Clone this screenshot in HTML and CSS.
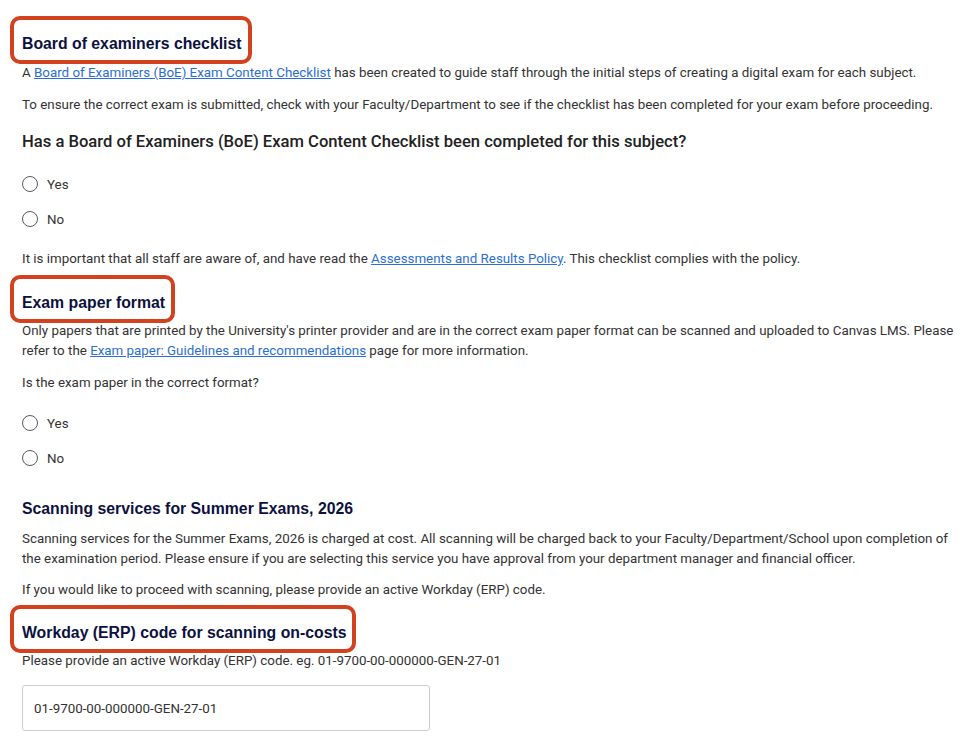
FILE: index.html
```html
<!DOCTYPE html>
<html lang="en">

<head>
    <meta charset="UTF-8">
    <meta name="viewport" content="width=device-width, initial-scale=1.0">
    <title>Exam submission</title>
    <link rel="stylesheet" href="styles.css">
</head>

<body>
    <div class="form">
        <!-- BoE checklist -->
        <h2 class="title marked first">Board of examiners checklist</h2>
        <p class="text">A <a href="#">Board of Examiners (BoE) Exam Content Checklist</a> has been created to guide staff through the initial steps of creating a digital exam for each subject.</p>
        <p class="text">To ensure the correct exam is submitted, check with your Faculty/Department to see if the checklist has been completed for your exam before proceeding.</p>
        <h3 class="question">Has a Board of Examiners (BoE) Exam Content Checklist been completed for this subject?</h3>
        <div class="choices">
            <label class="choice"><input type="radio" name="boe"> Yes</label>
            <label class="choice"><input type="radio" name="boe"> No</label>
        </div>
        <p class="text after">It is important that all staff are aware of, and have read the <a href="#">Assessments and Results Policy</a>. This checklist complies with the policy.</p>

        <!-- paper format -->
        <h2 class="title marked">Exam paper format</h2>
        <p class="text">Only papers that are printed by the University's printer provider and are in the correct exam paper format can be scanned and uploaded to Canvas LMS. Please refer to the <a href="#">Exam paper: Guidelines and recommendations</a> page for more information.</p>
        <p class="text">Is the exam paper in the correct format?</p>
        <div class="choices">
            <label class="choice"><input type="radio" name="format"> Yes</label>
            <label class="choice"><input type="radio" name="format"> No</label>
        </div>

        <!-- scanning -->
        <h2 class="title scan">Scanning services for Summer Exams, 2026</h2>
        <p class="text">Scanning services for the Summer Exams, 2026 is charged at cost. All scanning will be charged back to your Faculty/Department/School upon completion of the examination period. Please ensure if you are selecting this service you have approval from your department manager and financial officer.</p>
        <p class="text">If you would like to proceed with scanning, please provide an active Workday (ERP) code.</p>

        <h2 class="title marked code">Workday (ERP) code for scanning on-costs</h2>
        <p class="text">Please provide an active Workday (ERP) code. eg. 01-9700-00-000000-GEN-27-01</p>
        <input class="field" type="text" value="01-9700-00-000000-GEN-27-01">
    </div>
</body>

</html>
```

FILE: styles.css
```css
* {
    padding: 0;
    margin: 0;
    box-sizing: border-box;
}

body {
    font-family: Roboto, "Liberation Sans", sans-serif;
    font-size: 13.35px;
    color: #333;
    background: #fff;
}

.form {
    padding-left: 22px;
    width: 962px;
}

a {
    color: #2b6fd4;
}

.title {
    position: relative;
    width: fit-content;
    font-family: "Liberation Sans", Arial, sans-serif;
    font-size: 15.8px;
    font-weight: bold;
    line-height: 20px;
    color: #0c1140;
    margin: 24px 0 8px;
}

.title.first {
    margin-top: 34px;
    margin-bottom: 9px;
}

.title.scan {
    margin-top: 29px;
    margin-bottom: 10px;
}

.title.code {
    margin-top: 23px;
}

/* red frame drawn round the important headings */
.marked::after {
    content: "";
    position: absolute;
    left: -12px;
    right: -10px;
    top: -18px;
    bottom: -10px;
    border: 4px solid #d3421e;
    border-radius: 10px;
}

.text {
    line-height: 20px;
    margin-bottom: 12px;
}

.scan + .text {
    line-height: 19.5px;
    margin-bottom: 12px;
}

.question {
    font-size: 16.6px;
    font-weight: 500;
    line-height: 24px;
    color: #222;
    margin: 15px 0 18px;
}

.choices {
    display: flex;
    flex-direction: column;
    gap: 11px;
}

.text + .choices {
    margin-top: 18px;
}

.choice {
    display: flex;
    align-items: center;
    gap: 9px;
    height: 24px;
}

.choice input {
    appearance: none;
    width: 16px;
    height: 16px;
    border: 1.5px solid #5a5a5a;
    border-radius: 50%;
    margin: 0;
}

.after {
    margin-top: 18px;
}

.field {
    display: block;
    width: 408px;
    height: 46px;
    margin-top: 14px;
    padding: 0 11px;
    border: 1px solid #ccc;
    border-radius: 3px;
    font-family: Roboto, "Liberation Sans", sans-serif;
    font-size: 13.35px;
    color: #333;
}
```
